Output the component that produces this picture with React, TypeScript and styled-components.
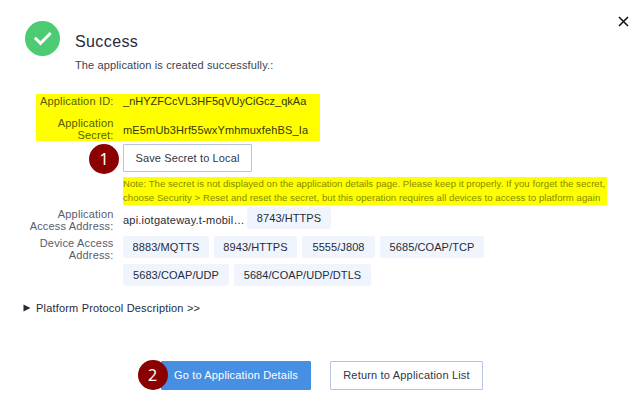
import React from "react";
import styled, { createGlobalStyle, css } from "styled-components";

const GlobalStyle = createGlobalStyle`
  * { box-sizing: border-box; }
  body {
    margin: 0;
    background: #fff;
    color: #252b3a;
    font-family: "Liberation Sans", Arial, Helvetica, sans-serif;
    font-size: 11px;
    line-height: 12px;
  }
`;

const Dialog = styled.main`
  position: relative;
  width: 643px;
  height: 410px;
  overflow: hidden;
  padding-top: 21px;
`;

const CloseButton = styled.button`
  position: absolute;
  top: 16px;
  right: 14px;
  width: 11px;
  height: 11px;
  padding: 0;
  border: 0;
  background: none;
  svg { display: block; }
`;

const Header = styled.header`
  display: flex;
  gap: 15px;
  height: 73px;
  padding-left: 25px;
`;

const Titles = styled.div`
  padding-top: 11px;
`;

const Title = styled.h1`
  margin: 0 0 5px;
  font-size: 16px;
  font-weight: 400;
  line-height: 20px;
  letter-spacing: 0.4px;
`;

const Subtitle = styled.p`
  margin: 0;
  line-height: 16px;
  color: #3c4252;
  letter-spacing: 0.13px;
`;

const Credentials = styled.section`
  width: 284px;
  height: 47px;
  margin-left: 36px;
  background: #ff0;
  color: #333a00;
`;

const Row = styled.div<{ $height: number; $inset?: boolean }>`
  display: flex;
  height: ${(p) => p.$height}px;
  margin-left: ${(p) => (p.$inset ? -36 : 0)}px;
`;

const Label = styled.div<{ $top?: number; $highlight?: boolean }>`
  flex: 0 0 113.5px;
  margin-right: 9.5px;
  padding-top: ${(p) => p.$top ?? 0}px;
  text-align: right;
  color: ${(p) => (p.$highlight ? "#575d00" : "#575d6c")};
  letter-spacing: 0.17px;
`;

const Value = styled.div<{ $top: number; $spacing?: number; $width?: number }>`
  flex: none;
  width: ${(p) => (p.$width ? `${p.$width}px` : "auto")};
  padding-top: ${(p) => p.$top}px;
  white-space: nowrap;
  letter-spacing: ${(p) => p.$spacing ?? 0}px;
`;

const SecretActions = styled.section`
  display: flex;
  align-items: flex-start;
  gap: 4px;
  height: 30px;
  margin-top: 3px;
  padding-left: 89px;
`;

const Step = styled.span`
  display: flex;
  flex: none;
  align-items: center;
  justify-content: center;
  width: 30px;
  height: 30px;
  border-radius: 50%;
  background: #8b0000;
  color: #fff;
  font-family: "Noto Sans", sans-serif;
  font-size: 16px;
  line-height: 30px;
`;

const Button = styled.button<{ $width: number; $primary?: boolean; $spacing: number; $height?: number }>`
  width: ${(p) => p.$width}px;
  height: ${(p) => p.$height ?? 29}px;
  padding: 0;
  border: 1px solid #b8c4de;
  border-radius: 1px;
  background: #fff;
  color: #303646;
  font: 11px/26px "Liberation Sans", Arial, sans-serif;
  letter-spacing: ${(p) => p.$spacing}px;
  white-space: nowrap;
  ${(p) => p.$primary && css`
    border-color: #478fe2;
    background: #478fe2;
    color: #fff;
  `}
`;

const Note = styled.p`
  width: 484px;
  height: 28px;
  margin: 3px 0 0 123px;
  background: #ff0;
  color: #858a00;
  font-size: 9.6px;
  line-height: 14px;
  white-space: nowrap;
`;

const NoteLine = styled.span<{ $spacing: number }>`
  display: block;
  letter-spacing: ${(p) => p.$spacing}px;
`;

const Addresses = styled.section`
  padding-top: 2px;
`;

const Tags = styled.div`
  display: flex;
  flex-wrap: wrap;
  align-content: flex-start;
  gap: 6px 5px;
  width: 370px;
`;

const Tag = styled.span<{ $width: number }>`
  width: ${(p) => p.$width}px;
  height: 22px;
  border-radius: 2px;
  background: #f0f5fd;
  line-height: 22px;
  text-align: center;
  white-space: nowrap;
  letter-spacing: 0.08px;
`;

const Disclosure = styled.div`
  display: flex;
  align-items: center;
  gap: 5px;
  height: 16px;
  padding-left: 23px;
  letter-spacing: 0.18px;
`;

const Footer = styled.footer`
  display: flex;
  align-items: center;
  height: 30px;
  margin-top: 44px;
  padding-left: 161px;
  gap: 19px;
`;

const PrimaryAction = styled.div`
  position: relative;
  height: 29px;
  & > ${Step} {
    position: absolute;
    left: -23.5px;
    top: -0.5px;
  }
`;

const devicePorts = [
  { name: "8883/MQTTS", width: 86 },
  { name: "8943/HTTPS", width: 83 },
  { name: "5555/J808", width: 73 },
  { name: "5685/COAP/TCP", width: 104 },
  { name: "5683/COAP/UDP", width: 106 },
  { name: "5684/COAP/UDP/DTLS", width: 137 },
];

export default function App() {
  return (
    <>
      <GlobalStyle />
      <Dialog>
        <CloseButton aria-label="Close">
          <svg width="11" height="11" viewBox="0 0 11 11">
            <path d="M1 1L10 10M10 1L1 10" stroke="#111722" strokeWidth="1.6" />
          </svg>
        </CloseButton>
        <Header>
          <svg width="35" height="35" viewBox="0 0 35 35">
            <circle cx="17.5" cy="17.5" r="17.5" fill="#4ccb73" />
            <path d="M9.9 16.8L15.5 22.3L25.7 12" fill="none" stroke="#fff" strokeWidth="3" />
          </svg>
          <Titles>
            <Title>Success</Title>
            <Subtitle>The application is created successfully.:</Subtitle>
          </Titles>
        </Header>
        <Credentials>
          <Row $height={23} $inset>
            <Label $top={1} $highlight>Application ID:</Label>
            <Value $top={1} $spacing={0.02}>_nHYZFCcVL3HF5qVUyCiGcz_qkAa</Value>
          </Row>
          <Row $height={23} $inset>
            <Label $highlight>Application<br />Secret:</Label>
            <Value $top={7} $spacing={0.15}>mE5mUb3Hrf55wxYmhmuxfehBS_Ia</Value>
          </Row>
        </Credentials>
        <SecretActions>
          <Step>1</Step>
          <Button $width={129} $height={28} $spacing={0.12}>Save Secret to Local</Button>
        </SecretActions>
        <Note>
          <NoteLine $spacing={0.04}>Note: The secret is not displayed on the application details page. Please keep it properly. If you forget the secret,</NoteLine>
          <NoteLine $spacing={0.04}>choose Security &gt; Reset and reset the secret, but this operation requires all devices to access to platform again</NoteLine>
        </Note>
        <Addresses>
          <Row $height={29}>
            <Label $top={1}>Application<br />Access Address:</Label>
            <Value $top={7} $spacing={0.22} $width={124}>api.iotgateway.t-mobil…</Value>
            <Tag $width={84}>8743/HTTPS</Tag>
          </Row>
          <Row $height={64}>
            <Label $top={1}>Device Access<br />Address:</Label>
            <Tags>
              {devicePorts.map((port) => (
                <Tag key={port.name} $width={port.width}>{port.name}</Tag>
              ))}
            </Tags>
          </Row>
        </Addresses>
        <Disclosure>
          <svg width="8" height="8" viewBox="0 0 8 8">
            <path d="M0.5 0.5L7.5 4L0.5 7.5Z" fill="#252b3a" />
          </svg>
          <span>Platform Protocol Description &gt;&gt;</span>
        </Disclosure>
        <Footer>
          <PrimaryAction>
            <Button $width={150} $primary $spacing={0.17}>Go to Application Details</Button>
            <Step>2</Step>
          </PrimaryAction>
          <Button $width={153} $spacing={0.19}>Return to Application List</Button>
        </Footer>
      </Dialog>
    </>
  );
}
